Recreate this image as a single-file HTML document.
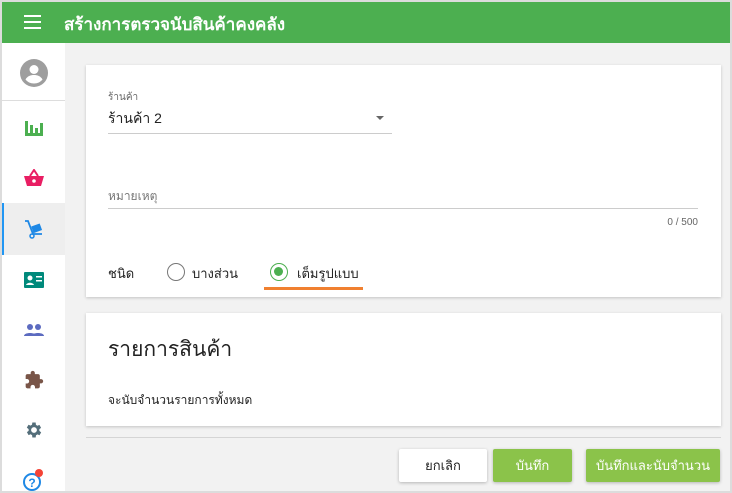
<!DOCTYPE html>
<html><head><meta charset="utf-8"><style>
*{box-sizing:border-box;margin:0;padding:0}
body{width:732px;height:493px;overflow:hidden;background:#dcdcdc;font-family:"Liberation Sans","Noto Sans CJK SC",sans-serif;color:#222;position:relative}
#frame{position:absolute;left:2px;top:2px;width:728px;height:489px;background:#f2f2f2;overflow:hidden}
#hdr{position:absolute;left:0;top:0;width:728px;height:41px;background:#4caf50;color:#fff}
#hdr .t{position:absolute;left:62px;top:9px;font-size:17px;font-weight:bold}
#side{position:absolute;left:0;top:41px;width:63px;height:448px;background:#fff}
.ic{position:absolute;left:0;width:63px;height:50px;display:flex;align-items:center;justify-content:center}
.card{position:absolute;background:#fff;box-shadow:0 1px 3px rgba(0,0,0,.2)}
.btn{position:absolute;height:33px;border-radius:2px;font-size:13px;display:flex;align-items:center;justify-content:center;box-shadow:0 1px 3px rgba(0,0,0,.25)}
</style></head><body>
<div id="frame">
<div id="hdr">
<svg style="position:absolute;left:22px;top:13px" width="17" height="14"><rect y="0" width="17" height="2" fill="#fff"/><rect y="6" width="17" height="2" fill="#fff"/><rect y="12" width="17" height="2" fill="#fff"/></svg>
<div class="t">สร้างการตรวจนับสินค้าคงคลัง</div>
</div>
<div id="side">
<div class="ic" style="top:4px;height:52px"><svg width="28" height="28" viewBox="0 0 28 28"><circle cx="14" cy="14" r="14" fill="#9e9e9e"/><circle cx="14" cy="10.5" r="4.5" fill="#fff"/><path d="M5.5 20.5c2-3.5 5-4.5 8.5-4.5s6.5 1 8.5 4.5c-2 2.5-5 4-8.5 4s-6.5-1.5-8.5-4z" fill="#fff"/></svg></div>
<div style="position:absolute;left:0;top:57px;width:63px;height:1px;background:#ddd"></div>
<div class="ic" style="top:60px"><svg width="18" height="16"><rect x="0" y="1" width="3" height="15" fill="#4caf50"/><rect x="0" y="13" width="18" height="3" fill="#4caf50"/><rect x="5" y="5" width="3" height="10" fill="#4caf50"/><rect x="10" y="8" width="3" height="7" fill="#4caf50"/><rect x="15" y="3" width="3" height="12" fill="#4caf50"/></svg></div>
<div class="ic" style="top:110px"><svg width="20" height="18"><path d="M6 7l4-6 4 6" stroke="#e91e63" stroke-width="2" fill="none"/><path d="M0 7h20l-3 10H3z" fill="#e91e63"/><circle cx="10" cy="12" r="1.8" fill="#fff"/></svg></div>
<div class="ic" style="top:160px;background:#eeeeee;height:52px"><div style="position:absolute;left:0;top:0;width:2px;height:52px;background:#2196f3"></div><svg width="20" height="20"><path d="M1 2h3l5 13h9" stroke="#1e88e5" stroke-width="1.8" fill="none"/><rect x="8" y="6" width="9" height="7" fill="#1e88e5" transform="rotate(-20 12 9)"/><circle cx="8" cy="17" r="2" stroke="#1e88e5" stroke-width="1.5" fill="none"/></svg></div>
<div class="ic" style="top:212px"><svg width="20" height="16"><rect width="20" height="16" rx="1" fill="#00897b"/><circle cx="6" cy="6" r="2.5" fill="#fff"/><path d="M2 13c1-3 7-3 8 0z" fill="#fff"/><rect x="12" y="4" width="6" height="1.5" fill="#fff"/><rect x="12" y="8" width="6" height="1.5" fill="#fff"/></svg></div>
<div class="ic" style="top:262px"><svg width="20" height="12"><circle cx="6" cy="3" r="3" fill="#5c6bc0"/><circle cx="14" cy="3" r="3" fill="#5c6bc0"/><path d="M0 12c0-4 12-4 12 0z" fill="#5c6bc0"/><path d="M8 12c0-4 12-4 12 0z" fill="#5c6bc0"/></svg></div>
<div class="ic" style="top:312px"><svg width="20" height="20" viewBox="0 0 24 24"><path d="M20.5 11H19V7c0-1.1-.9-2-2-2h-4V3.5a2.5 2.5 0 0 0-5 0V5H4c-1.1 0-2 .9-2 2v3.8h1.5c1.5 0 2.7 1.2 2.7 2.7S5 16.2 3.5 16.2H2V20c0 1.1.9 2 2 2h3.8v-1.5c0-1.5 1.2-2.7 2.7-2.7s2.7 1.2 2.7 2.7V22H17c1.1 0 2-.9 2-2v-4h1.5a2.5 2.5 0 0 0 0-5z" fill="#795548"/></svg></div>
<div class="ic" style="top:362px"><svg width="20" height="20" viewBox="0 0 24 24"><path d="M19.4 13a7.5 7.5 0 0 0 0-2l2.1-1.6-2-3.5-2.5 1a7.3 7.3 0 0 0-1.7-1L15 3h-4l-.4 2.7a7.3 7.3 0 0 0-1.7 1l-2.5-1-2 3.5L6.6 11a7.5 7.5 0 0 0 0 2l-2.1 1.6 2 3.5 2.5-1c.5.4 1.1.7 1.7 1L11 21h4l.4-2.7c.6-.3 1.2-.6 1.7-1l2.5 1 2-3.5zM13 15.5a3.5 3.5 0 1 1 0-7 3.5 3.5 0 0 1 0 7z" fill="#546e7a" transform="translate(-1 0)"/></svg></div>
<div class="ic" style="top:412px"><svg width="24" height="24"><circle cx="10" cy="14" r="8" stroke="#1e88e5" stroke-width="2" fill="none"/><text x="10" y="19" font-size="12" font-weight="bold" fill="#1e88e5" text-anchor="middle" font-family="Liberation Sans">?</text><circle cx="17" cy="5" r="4" fill="#f44336"/></svg></div>
</div>

<div class="card" style="left:84px;top:63px;width:635px;height:232px">
<div style="position:absolute;left:22px;top:25px;font-size:10px;color:#666">ร้านค้า</div>
<div style="position:absolute;left:22px;top:43px;font-size:14px">ร้านค้า 2</div>
<div style="position:absolute;left:290px;top:51px;width:0;height:0;border-left:4px solid transparent;border-right:4px solid transparent;border-top:4px solid #666"></div>
<div style="position:absolute;left:22px;top:68px;width:284px;height:1px;background:#ccc"></div>
<div style="position:absolute;left:22px;top:122px;font-size:12px;color:#777">หมายเหตุ</div>
<div style="position:absolute;left:22px;top:143px;width:590px;height:1px;background:#ccc"></div>
<div style="position:absolute;right:23px;top:152px;font-size:10px;color:#666">0 / 500</div>
<div style="position:absolute;left:22px;top:198px;font-size:13px">ชนิด</div>
<div style="position:absolute;left:81px;top:198px;width:18px;height:18px;border:1.5px solid #777;border-radius:50%"></div>
<div style="position:absolute;left:106px;top:198px;font-size:13px">บางส่วน</div>
<div style="position:absolute;left:184px;top:198px;width:18px;height:18px;border:1.5px solid #4caf50;border-radius:50%"><div style="position:absolute;left:3px;top:3px;width:9px;height:9px;background:#4caf50;border-radius:50%"></div></div>
<div style="position:absolute;left:211px;top:198px;font-size:13px">เต็มรูปแบบ</div>
<div style="position:absolute;left:178px;top:222px;width:99px;height:3px;background:#f08030"></div>
</div>

<div class="card" style="left:84px;top:311px;width:635px;height:113px">
<div style="position:absolute;left:22px;top:20px;font-size:21px">รายการสินค้า</div>
<div style="position:absolute;left:22px;top:78px;font-size:12px">จะนับจำนวนรายการทั้งหมด</div>
</div>
<div style="position:absolute;left:84px;top:435px;width:635px;height:1px;background:#d5d5d5"></div>

<div class="btn" style="left:397px;top:447px;width:88px;background:#fff;color:#222">ยกเลิก</div>
<div class="btn" style="left:491px;top:447px;width:79px;background:#8bc34a;color:#fff">บันทึก</div>
<div class="btn" style="left:584px;top:447px;width:134px;background:#8bc34a;color:#fff">บันทึกและนับจำนวน</div>
</div>
</body></html>
